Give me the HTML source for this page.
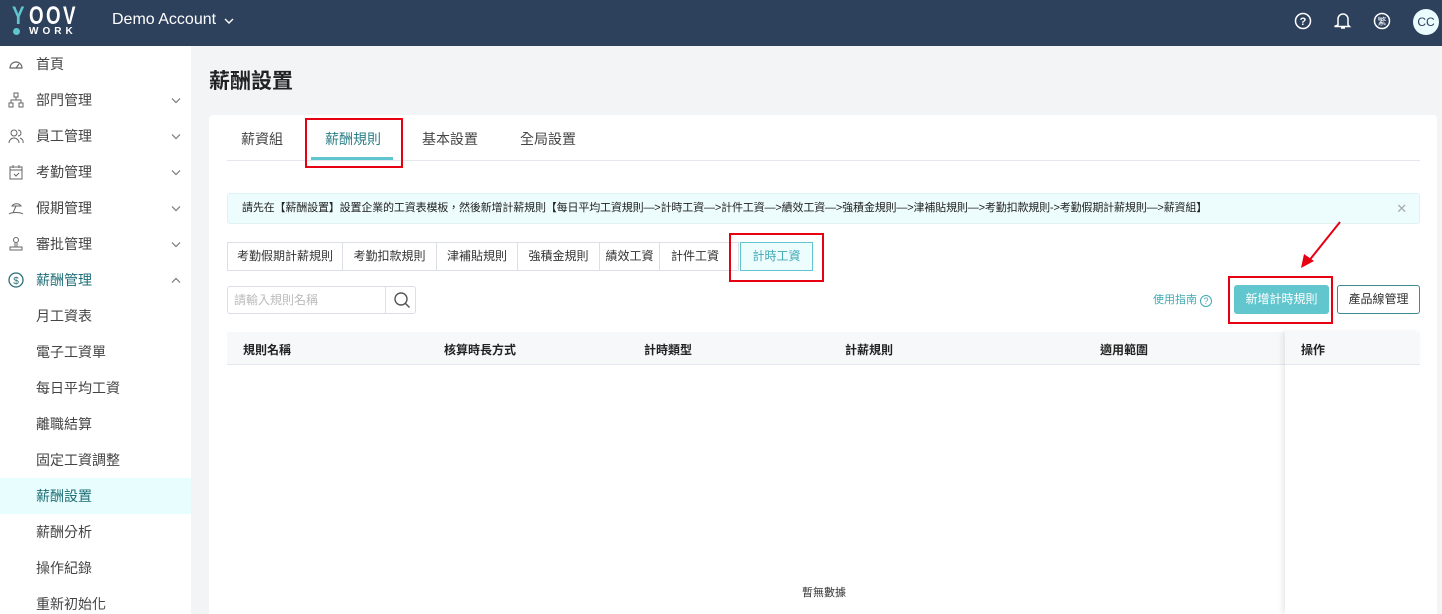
<!DOCTYPE html>
<html><head><meta charset="utf-8"><style>
*{box-sizing:border-box;margin:0;padding:0}
html,body{width:1442px;height:614px;overflow:hidden}
body{background:#f3f4f6;font-family:"Liberation Sans","Noto Sans CJK TC",sans-serif;position:relative;color:#333}
.hdr{position:absolute;left:0;top:0;width:1442px;height:46px;background:#2d405c}
.side{position:absolute;left:0;top:46px;width:191px;height:568px;background:#fff}
.it{position:absolute;left:0;width:191px;height:36px;line-height:36px;font-size:14px;color:#444}
.it .t{position:absolute;left:36px}
.it svg.ic{position:absolute;left:8px;top:10px}
.it svg.ch{position:absolute;left:171px;top:15px}
.abs{position:absolute}
.card{position:absolute;left:209px;top:115px;width:1228px;height:499px;background:#fff;border-radius:4px 4px 0 0}
.st{position:absolute;top:242px;height:29px;line-height:27px;font-size:12px;color:#333;text-align:center;border:1px solid #dcdfe6;border-right:none;background:#fff}
.th{position:absolute;top:341px;font-size:12px;font-weight:bold;color:#222}
.red{position:absolute;border:2px solid #e60012}
.lg{position:absolute;top:2px;color:#fff;font:bold 25px 'Liberation Sans Narrow','Liberation Sans',sans-serif;transform:scaleX(.75);transform-origin:left}
</style></head><body>
<div class="hdr">
 <div class="lg" style="left:12px;color:#5fc6cf">Y</div>
 <div class="lg" style="left:29px">O</div>
 <div class="lg" style="left:46px">O</div>
 <div class="lg" style="left:63px">V</div>
 <div class="abs" style="left:13px;top:28px;width:7px;height:7px;border-radius:50%;background:#5fc6cf"></div>
 <div class="abs" style="left:29px;top:26px;color:#fff;font:bold 10px 'Liberation Sans';letter-spacing:4px">WORK</div>
 <div class="abs" style="left:112px;top:11px;color:#fff;font-size:16px">Demo Account</div>
 <svg class="abs" style="left:224px;top:17px" width="10" height="8" viewBox="0 0 10 8"><path d="M1 2l4 4 4-4" fill="none" stroke="#fff" stroke-width="1.4"/></svg>
 <svg class="abs" style="left:1294px;top:12px" width="18" height="18" viewBox="0 0 18 18"><circle cx="9" cy="9" r="7.5" fill="none" stroke="#fff" stroke-width="1.5"/><text x="9" y="13" font-size="11" font-weight="bold" fill="#fff" text-anchor="middle" font-family="Liberation Sans">?</text></svg>
 <svg class="abs" style="left:1334px;top:11px" width="18" height="20" viewBox="0 0 18 20"><path d="M4 14V8a5 5 0 0110 0v6l1.5 1.5h-15z M7 17h4" fill="none" stroke="#fff" stroke-width="1.5"/></svg>
 <svg class="abs" style="left:1373px;top:12px" width="18" height="18" viewBox="0 0 18 18"><circle cx="9" cy="9" r="7.5" fill="none" stroke="#fff" stroke-width="1.5"/><text x="9" y="12.5" font-size="9" fill="#fff" text-anchor="middle" font-family="Noto Sans CJK TC">繁</text></svg>
 <div class="abs" style="left:1413px;top:9px;width:26px;height:26px;border-radius:50%;background:#eafcfd;color:#2d405c;font-size:12px;text-align:center;line-height:26px">CC</div>
</div>
<div class="side">
 <div class="it" style="top:0"><svg class="ic" width="16" height="16" viewBox="0 0 16 16"><path d="M2 12a6 6 0 0112 0z M8 12l3-4" fill="none" stroke="#666" stroke-width="1.2"/></svg><span class="t">首頁</span></div>
 <div class="it" style="top:36px"><svg class="ic" width="16" height="16" viewBox="0 0 16 16"><rect x="6" y="1" width="4" height="4" fill="none" stroke="#666"/><rect x="1" y="11" width="4" height="4" fill="none" stroke="#666"/><rect x="11" y="11" width="4" height="4" fill="none" stroke="#666"/><path d="M8 5v3M3 11V8h10v3" fill="none" stroke="#666"/></svg><span class="t">部門管理</span><svg class="ch" width="10" height="7" viewBox="0 0 10 7"><path d="M1 1.5l4 4 4-4" fill="none" stroke="#777" stroke-width="1.2"/></svg></div>
 <div class="it" style="top:72px"><svg class="ic" width="16" height="16" viewBox="0 0 16 16"><circle cx="6" cy="5" r="3" fill="none" stroke="#666"/><path d="M1 15a5 5 0 0110 0M10 2a3 3 0 010 6M12 10a4 4 0 013 5" fill="none" stroke="#666"/></svg><span class="t">員工管理</span><svg class="ch" width="10" height="7" viewBox="0 0 10 7"><path d="M1 1.5l4 4 4-4" fill="none" stroke="#777" stroke-width="1.2"/></svg></div>
 <div class="it" style="top:108px"><svg class="ic" width="16" height="16" viewBox="0 0 16 16"><rect x="2" y="3" width="12" height="12" fill="none" stroke="#666"/><path d="M2 6h12M5 1v3M11 1v3M6 10l2 2 3-3" fill="none" stroke="#666"/></svg><span class="t">考勤管理</span><svg class="ch" width="10" height="7" viewBox="0 0 10 7"><path d="M1 1.5l4 4 4-4" fill="none" stroke="#777" stroke-width="1.2"/></svg></div>
 <div class="it" style="top:144px"><svg class="ic" width="16" height="16" viewBox="0 0 16 16"><path d="M4 6a5 4 0 019 0zM8 6l-3 7M1 14c3-2 11-2 14 0" fill="none" stroke="#666"/></svg><span class="t">假期管理</span><svg class="ch" width="10" height="7" viewBox="0 0 10 7"><path d="M1 1.5l4 4 4-4" fill="none" stroke="#777" stroke-width="1.2"/></svg></div>
 <div class="it" style="top:180px"><svg class="ic" width="16" height="16" viewBox="0 0 16 16"><circle cx="8" cy="4" r="2.5" fill="none" stroke="#666"/><path d="M7 7v4M9 7v4M2 11h12v3H2z" fill="none" stroke="#666"/></svg><span class="t">審批管理</span><svg class="ch" width="10" height="7" viewBox="0 0 10 7"><path d="M1 1.5l4 4 4-4" fill="none" stroke="#777" stroke-width="1.2"/></svg></div>
 <div class="it" style="top:216px"><svg class="ic" width="16" height="16" viewBox="0 0 16 16"><circle cx="8" cy="8" r="7" fill="none" stroke="#2a6f76" stroke-width="1.3"/><text x="8" y="12" font-size="10" fill="#2a6f76" text-anchor="middle" font-family="Liberation Sans">$</text></svg><span class="t" style="color:#1e6e77">薪酬管理</span><svg class="ch" width="10" height="7" viewBox="0 0 10 7"><path d="M1 5.5l4-4 4 4" fill="none" stroke="#777" stroke-width="1.2"/></svg></div>
 <div class="it" style="top:252px"><span class="t">月工資表</span></div>
 <div class="it" style="top:288px"><span class="t">電子工資單</span></div>
 <div class="it" style="top:324px"><span class="t">每日平均工資</span></div>
 <div class="it" style="top:360px"><span class="t">離職結算</span></div>
 <div class="it" style="top:396px"><span class="t">固定工資調整</span></div>
 <div class="it" style="top:432px;background:#e8fdfd"><span class="t" style="color:#1e6e77">薪酬設置</span></div>
 <div class="it" style="top:468px"><span class="t">薪酬分析</span></div>
 <div class="it" style="top:504px"><span class="t">操作紀錄</span></div>
 <div class="it" style="top:540px"><span class="t">重新初始化</span></div>
</div>
<div class="abs" style="left:209px;top:65px;font-size:21px;font-weight:bold;color:#222">薪酬設置</div>
<div class="card"></div>
<div class="abs" style="left:241px;top:129px;font-size:14px;color:#444">薪資組</div>
<div class="abs" style="left:325px;top:129px;font-size:14px;color:#2a7f88">薪酬規則</div>
<div class="abs" style="left:422px;top:129px;font-size:14px;color:#444">基本設置</div>
<div class="abs" style="left:520px;top:129px;font-size:14px;color:#444">全局設置</div>
<div class="abs" style="left:227px;top:160px;width:1193px;height:1px;background:#e4e7ed"></div>
<div class="abs" style="left:311px;top:157px;width:82px;height:3px;background:#5fc6cf"></div>
<div class="red" style="left:305px;top:118px;width:98px;height:50px"></div>
<div class="abs" style="left:227px;top:193px;width:1193px;height:31px;background:#edfcfd;border:1px solid #dff3f5;border-radius:3px;font-size:11px;line-height:29px;padding-left:14px;color:#222;letter-spacing:-0.15px">請先在【薪酬設置】設置企業的工資表模板，然後新增計薪規則【每日平均工資規則—&gt;計時工資—&gt;計件工資—&gt;績效工資—&gt;強積金規則—&gt;津補貼規則—&gt;考勤扣款規則-&gt;考勤假期計薪規則—&gt;薪資組】<span style="position:absolute;right:12px;color:#aaa;font-size:13px">✕</span></div>
<div class="st" style="left:227px;width:115px">考勤假期計薪規則</div>
<div class="st" style="left:342px;width:94px">考勤扣款規則</div>
<div class="st" style="left:436px;width:81px">津補貼規則</div>
<div class="st" style="left:517px;width:82px">強積金規則</div>
<div class="st" style="left:599px;width:60px">績效工資</div>
<div class="st" style="left:659px;width:80px;border-right:1px solid #dcdfe6;padding-right:8px">計件工資</div>
<div class="st" style="left:740px;width:73px;border:1px solid #5fc6cf;background:#edfcfd;color:#3fa9b3">計時工資</div>
<div class="red" style="left:729px;top:233px;width:95px;height:49px"></div>
<div class="abs" style="left:227px;top:286px;width:189px;height:28px;border:1px solid #dcdfe6;border-radius:3px;font-size:12px;line-height:26px;padding-left:6px;color:#bbb">請輸入規則名稱</div>
<div class="abs" style="left:385px;top:286px;width:1px;height:28px;background:#dcdfe6"></div>
<svg class="abs" style="left:393px;top:291px" width="18" height="18" viewBox="0 0 18 18"><circle cx="8" cy="8" r="6" fill="none" stroke="#555" stroke-width="1.4"/><path d="M12.5 12.5l4 4" stroke="#555" stroke-width="1.5"/></svg>
<div class="abs" style="left:1153px;top:291px;font-size:11px;color:#3fa9b3">使用指南 <span style="display:inline-block;width:12px;height:12px;border:1px solid #3fa9b3;border-radius:50%;font-size:9px;line-height:10px;text-align:center;vertical-align:-1px">?</span></div>
<div class="abs" style="left:1234px;top:285px;width:95px;height:29px;background:#62c6cf;border-radius:3px;color:#fff;font-size:12px;text-align:center;line-height:29px">新增計時規則</div>
<div class="red" style="left:1228px;top:276px;width:105px;height:48px"></div>
<div class="abs" style="left:1337px;top:285px;width:83px;height:29px;border:1px solid #3f8b93;border-radius:3px;color:#333;font-size:12px;text-align:center;line-height:27px">產品線管理</div>
<svg class="abs" style="left:1296px;top:218px" width="50" height="54" viewBox="0 0 50 54"><path d="M44 4L12 44" stroke="#e60012" stroke-width="2"/><path d="M5 50l3-14 10 7z" fill="#e60012"/></svg>
<div class="abs" style="left:227px;top:332px;width:1193px;height:33px;background:#f7f8fa;border-bottom:1px solid #e4e7ed"></div>
<div class="th" style="left:243px">規則名稱</div>
<div class="th" style="left:444px">核算時長方式</div>
<div class="th" style="left:644px">計時類型</div>
<div class="th" style="left:845px">計薪規則</div>
<div class="th" style="left:1100px">適用範圍</div>
<div class="abs" style="left:1285px;top:332px;width:135px;height:282px;background:#fff;box-shadow:-3px 0 5px rgba(0,0,0,.08)"></div>
<div class="abs" style="left:1285px;top:332px;width:135px;height:33px;background:#f7f8fa;border-bottom:1px solid #e4e7ed"></div>
<div class="th" style="left:1301px">操作</div>
<div class="abs" style="left:802px;top:584px;font-size:11px;color:#333">暫無數據</div>
</body></html>
